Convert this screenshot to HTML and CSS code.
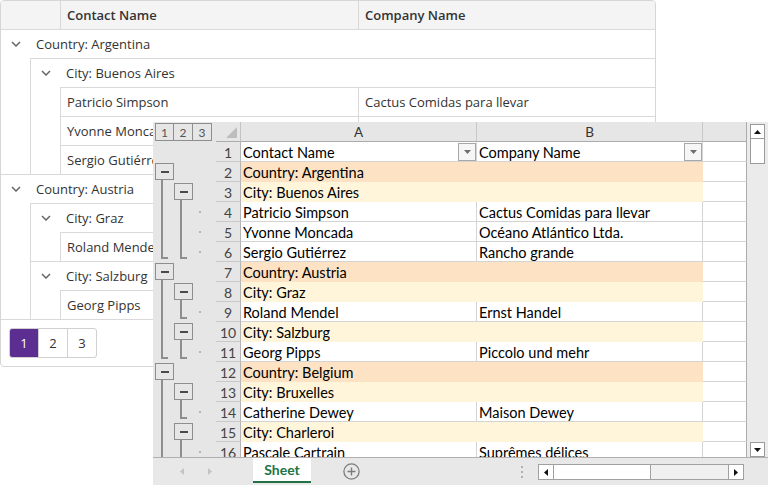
FILE: index.html
```html
<!DOCTYPE html>
<html>
<head>
<meta charset="utf-8">
<link rel="stylesheet" href="styles.css">
</head>
<body>
<div class="stage">
  <div class="grid">
    <div class="ghead">
      <div class="gh-ind"></div>
      <div class="gh-c1">Contact Name</div>
      <div class="gh-c2">Company Name</div>
    </div>

    <div class="grp">
      <div class="grow"><span class="chev"><svg width="10" height="6" viewBox="0 0 10 6"><path d="M1 1 L5 5 L9 1"/></svg></span><span class="gt">Country: Argentina</span></div>
      <div class="nest">
        <div class="grp">
          <div class="grow"><span class="chev"><svg width="10" height="6" viewBox="0 0 10 6"><path d="M1 1 L5 5 L9 1"/></svg></span><span class="gt">City: Buenos Aires</span></div>
          <div class="nest">
            <div class="drow"><div class="dc1">Patricio Simpson</div><div class="dc2">Cactus Comidas para llevar</div></div>
            <div class="drow"><div class="dc1">Yvonne Moncada</div><div class="dc2">Océano Atlántico Ltda.</div></div>
            <div class="drow"><div class="dc1">Sergio Gutiérrez</div><div class="dc2">Rancho grande</div></div>
          </div>
        </div>
      </div>
    </div>

    <div class="grp">
      <div class="grow"><span class="chev"><svg width="10" height="6" viewBox="0 0 10 6"><path d="M1 1 L5 5 L9 1"/></svg></span><span class="gt">Country: Austria</span></div>
      <div class="nest">
        <div class="grp">
          <div class="grow"><span class="chev"><svg width="10" height="6" viewBox="0 0 10 6"><path d="M1 1 L5 5 L9 1"/></svg></span><span class="gt">City: Graz</span></div>
          <div class="nest">
            <div class="drow"><div class="dc1">Roland Mendel</div><div class="dc2">Ernst Handel</div></div>
          </div>
        </div>
        <div class="grp">
          <div class="grow"><span class="chev"><svg width="10" height="6" viewBox="0 0 10 6"><path d="M1 1 L5 5 L9 1"/></svg></span><span class="gt">City: Salzburg</span></div>
          <div class="nest">
            <div class="drow"><div class="dc1">Georg Pipps</div><div class="dc2">Piccolo und mehr</div></div>
          </div>
        </div>
      </div>
    </div>

    <div class="pager">
      <div class="pgroup">
        <span class="pbtn active">1</span><span class="pbtn">2</span><span class="pbtn">3</span>
      </div>
    </div>
  </div>

  <div class="sheet">
    <div class="sheet-main">
      <div class="cells">
        <div class="srow hdr">
          <div class="ol levels"><span class="lvl">1</span><span class="lvl">2</span><span class="lvl">3</span></div>
          <div class="corner"><svg width="11" height="11" viewBox="0 0 11 11"><path d="M11 0 L11 11 L0 11 Z"/></svg></div>
          <div class="ch">A</div>
          <div class="ch">B</div>
          <div class="ch last"></div>
        </div>

        <div class="srow">
          <div class="ol"><span class="lane"></span><span class="lane"></span><span class="lane l3"></span></div>
          <div class="rh">1</div>
          <div class="c th"><span class="ct">Contact Name</span><span class="filt"><svg width="7" height="4" viewBox="0 0 7 4"><path d="M0 0 L7 0 L3.5 4 Z"/></svg></span></div>
          <div class="c th"><span class="ct">Company Name</span><span class="filt"><svg width="7" height="4" viewBox="0 0 7 4"><path d="M0 0 L7 0 L3.5 4 Z"/></svg></span></div>
          <div class="c"></div>
        </div>

        <div class="srow">
          <div class="ol"><span class="lane btn"><span class="mbtn"><i></i></span></span><span class="lane"></span><span class="lane l3"></span></div>
          <div class="rh">2</div>
          <div class="c co">Country: Argentina</div>
          <div class="c co"></div>
          <div class="c"></div>
        </div>

        <div class="srow">
          <div class="ol"><span class="lane line"></span><span class="lane btn"><span class="mbtn"><i></i></span></span><span class="lane l3"></span></div>
          <div class="rh">3</div>
          <div class="c ci">City: Buenos Aires</div>
          <div class="c ci"></div>
          <div class="c"></div>
        </div>

        <div class="srow">
          <div class="ol"><span class="lane line"></span><span class="lane line"></span><span class="lane l3 dot"></span></div>
          <div class="rh">4</div>
          <div class="c">Patricio Simpson</div>
          <div class="c">Cactus Comidas para llevar</div>
          <div class="c"></div>
        </div>

        <div class="srow">
          <div class="ol"><span class="lane line"></span><span class="lane line"></span><span class="lane l3 dot"></span></div>
          <div class="rh">5</div>
          <div class="c">Yvonne Moncada</div>
          <div class="c">Océano Atlántico Ltda.</div>
          <div class="c"></div>
        </div>

        <div class="srow">
          <div class="ol"><span class="lane end"></span><span class="lane end"></span><span class="lane l3 dot"></span></div>
          <div class="rh">6</div>
          <div class="c">Sergio Gutiérrez</div>
          <div class="c">Rancho grande</div>
          <div class="c"></div>
        </div>

        <div class="srow">
          <div class="ol"><span class="lane btn"><span class="mbtn"><i></i></span></span><span class="lane"></span><span class="lane l3"></span></div>
          <div class="rh">7</div>
          <div class="c co">Country: Austria</div>
          <div class="c co"></div>
          <div class="c"></div>
        </div>

        <div class="srow">
          <div class="ol"><span class="lane line"></span><span class="lane btn"><span class="mbtn"><i></i></span></span><span class="lane l3"></span></div>
          <div class="rh">8</div>
          <div class="c ci">City: Graz</div>
          <div class="c ci"></div>
          <div class="c"></div>
        </div>

        <div class="srow">
          <div class="ol"><span class="lane line"></span><span class="lane end"></span><span class="lane l3 dot"></span></div>
          <div class="rh">9</div>
          <div class="c">Roland Mendel</div>
          <div class="c">Ernst Handel</div>
          <div class="c"></div>
        </div>

        <div class="srow">
          <div class="ol"><span class="lane line"></span><span class="lane btn"><span class="mbtn"><i></i></span></span><span class="lane l3"></span></div>
          <div class="rh">10</div>
          <div class="c ci">City: Salzburg</div>
          <div class="c ci"></div>
          <div class="c"></div>
        </div>

        <div class="srow">
          <div class="ol"><span class="lane end"></span><span class="lane end"></span><span class="lane l3 dot"></span></div>
          <div class="rh">11</div>
          <div class="c">Georg Pipps</div>
          <div class="c">Piccolo und mehr</div>
          <div class="c"></div>
        </div>

        <div class="srow">
          <div class="ol"><span class="lane btn"><span class="mbtn"><i></i></span></span><span class="lane"></span><span class="lane l3"></span></div>
          <div class="rh">12</div>
          <div class="c co">Country: Belgium</div>
          <div class="c co"></div>
          <div class="c"></div>
        </div>

        <div class="srow">
          <div class="ol"><span class="lane line"></span><span class="lane btn"><span class="mbtn"><i></i></span></span><span class="lane l3"></span></div>
          <div class="rh">13</div>
          <div class="c ci">City: Bruxelles</div>
          <div class="c ci"></div>
          <div class="c"></div>
        </div>

        <div class="srow">
          <div class="ol"><span class="lane line"></span><span class="lane end"></span><span class="lane l3 dot"></span></div>
          <div class="rh">14</div>
          <div class="c">Catherine Dewey</div>
          <div class="c">Maison Dewey</div>
          <div class="c"></div>
        </div>

        <div class="srow">
          <div class="ol"><span class="lane line"></span><span class="lane btn"><span class="mbtn"><i></i></span></span><span class="lane l3"></span></div>
          <div class="rh">15</div>
          <div class="c ci">City: Charleroi</div>
          <div class="c ci"></div>
          <div class="c"></div>
        </div>

        <div class="srow">
          <div class="ol"><span class="lane line"></span><span class="lane line"></span><span class="lane l3 dot"></span></div>
          <div class="rh">16</div>
          <div class="c">Pascale Cartrain</div>
          <div class="c">Suprêmes délices</div>
          <div class="c"></div>
        </div>
      </div>

      <div class="vscroll">
        <span class="sbtn up"><svg width="7" height="4" viewBox="0 0 7 4"><path d="M0 4 L7 4 L3.5 0 Z"/></svg></span>
        <span class="vthumb"></span>
        <span class="vtrack"></span>
        <span class="sbtn down"><svg width="7" height="4" viewBox="0 0 7 4"><path d="M0 0 L7 0 L3.5 4 Z"/></svg></span>
      </div>
    </div>

    <div class="tabbar">
      <div class="nav">
        <svg width="4" height="7" viewBox="0 0 4 7"><path d="M4 0 L4 7 L0 3.5 Z"/></svg>
        <svg width="4" height="7" viewBox="0 0 4 7"><path d="M0 0 L0 7 L4 3.5 Z"/></svg>
      </div>
      <div class="tab">Sheet</div>
      <div class="addsheet"><svg width="17" height="17" viewBox="0 0 17 17"><circle cx="8.5" cy="8.5" r="7.6"/><path d="M8.5 4.5 V12.5 M4.5 8.5 H12.5"/></svg></div>
      <div class="tabspace"></div>
      <div class="vdots"><i></i><i></i><i></i></div>
      <div class="hscroll">
        <span class="hbtn left"><svg width="4" height="7" viewBox="0 0 4 7"><path d="M4 0 L4 7 L0 3.5 Z"/></svg></span>
        <span class="hthumb"></span>
        <span class="htrack"></span>
        <span class="hbtn right"><svg width="4" height="7" viewBox="0 0 4 7"><path d="M0 0 L0 7 L4 3.5 Z"/></svg></span>
      </div>
    </div>
  </div>
</div>
</body>
</html>
```

FILE: styles.css
```css
* { box-sizing: border-box; }
html, body { margin: 0; padding: 0; background: #ffffff; }
body { width: 768px; height: 485px; overflow: hidden; }
.stage { position: relative; width: 768px; height: 485px; }

/* ---------- back data grid ---------- */
.grid {
  width: 656px;
  border: 1px solid #d6d6d6;
  border-radius: 4px;
  font-family: "Open Sans", "Noto Sans", sans-serif;
  font-size: 13px;
  color: #333333;
  overflow: hidden;
}
.ghead {
  display: flex;
  height: 28px;
  background: #f4f4f4;
  font-weight: 600;
}
.gh-ind { width: 60px; border-right: 1px solid #d9d9d9; }
.gh-c1 { width: 298px; border-right: 1px solid #d9d9d9; padding-left: 6px; display: flex; align-items: center; }
.gh-c2 { flex: 1; padding-left: 6px; display: flex; align-items: center; }

.grow {
  display: flex;
  align-items: center;
  height: 29px;
  border-top: 1px solid #d9d9d9;
}
.chev { width: 29px; display: flex; justify-content: center; align-items: center; }
.chev svg path { fill: none; stroke: #666666; stroke-width: 1.5; }
.gt { padding-left: 6px; }
.nest { margin-left: 29px; border-left: 1px solid #d9d9d9; }
.drow { display: flex; height: 29px; border-top: 1px solid #d9d9d9; }
.dc1 { width: 298px; border-right: 1px solid #d9d9d9; padding-left: 6px; display: flex; align-items: center; white-space: nowrap; overflow: hidden; }
.dc2 { flex: 1; padding-left: 6px; display: flex; align-items: center; white-space: nowrap; }

.pager { border-top: 1px solid #d9d9d9; padding: 8px; height: 47px; }
.pgroup { display: inline-flex; border: 1px solid #d0d0d0; border-radius: 3px; overflow: hidden; height: 30px; }
.pbtn { width: 29px; display: flex; align-items: center; justify-content: center; border-left: 1px solid #d0d0d0; color: #333; }
.pbtn:first-child { border-left: none; width: 28px; }
.pbtn.active { background: #5c2e91; color: #ffffff; }

/* ---------- spreadsheet ---------- */
.sheet {
  position: absolute;
  left: 153px;
  top: 122px;
  width: 615px;
  height: 363px;
  display: flex;
  flex-direction: column;
  background: #e6e6e6;
  font-family: "Lato", "Liberation Sans", sans-serif;
  font-size: 14.5px;
  color: #000000;
}
.sheet-main { display: flex; height: 335px; }
.cells { width: 594px; height: 335px; overflow: hidden; background: #ffffff; }
.srow {
  display: grid;
  grid-template-columns: 63px 25px 236px 226px 44px;
  height: 20px;
}
.ol { display: flex; background: #e6e6e6; }
.lane { position: relative; width: 19px; height: 20px; }
.lane.l3 { width: 25px; }
.lane.line::before { content: ""; position: absolute; left: 8px; top: 0; width: 2px; height: 20px; background: #8e8e8e; }
.lane.end::before { content: ""; position: absolute; left: 8px; top: 0; width: 2px; height: 17px; background: #8e8e8e; }
.lane.end::after { content: ""; position: absolute; left: 8px; top: 15px; width: 7px; height: 2px; background: #8e8e8e; }
.lane.btn::after { content: ""; position: absolute; left: 8px; top: 18px; width: 2px; height: 2px; background: #8e8e8e; }
.lane.dot::before { content: ""; position: absolute; left: 8px; top: 9px; width: 2px; height: 2px; background: #b4b4b4; }
.mbtn {
  display: flex;
  align-items: center;
  justify-content: center;
  margin: 1px 0 0 2px;
  width: 19px;
  height: 17px;
  border: 1px solid #8e8e8e;
  background: #e6e6e6;
}
.mbtn i { display: block; width: 8px; height: 2px; background: #4a4a4a; }

.levels { align-items: flex-start; padding: 1px 0 0 2px; }
.lvl {
  width: 20px;
  height: 18px;
  border: 1px solid #8e8e8e;
  margin-left: -1px;
  display: flex;
  align-items: center;
  justify-content: center;
  font-size: 12px;
  color: #555555;
}
.lvl:first-child { margin-left: 0; width: 19px; }
.corner {
  background: #e6e6e6;
  border-bottom: 1px solid #ababab;
  border-right: 1px solid #c4c4c4;
  display: flex;
  align-items: flex-end;
  justify-content: flex-end;
  padding: 0 3px 3px 0;
}
.corner svg path { fill: #bdbdbd; }
.ch {
  background: #e6e6e6;
  border-bottom: 1px solid #ababab;
  border-right: 1px solid #c8c8c8;
  display: flex;
  align-items: center;
  justify-content: center;
  padding-top: 1px;
  font-size: 13.5px;
  color: #333333;
}
.ch.last { border-right: 1px solid #ababab; }

.rh {
  background: #e6e6e6;
  border-bottom: 1px solid #c9c9c9;
  border-right: 1px solid #b4b4b4;
  display: flex;
  align-items: center;
  justify-content: center;
  padding-top: 2px;
  color: #444444;
  font-size: 14px;
}
.c {
  border-right: 1px solid #d4d4d4;
  border-bottom: 1px solid #d4d4d4;
  padding: 2px 0 0 2px;
  line-height: 17px;
  white-space: nowrap;
  overflow: hidden;
}
.srow > .c:last-child { border-right-color: #ababab; }
.c.co { background: #fde2c4; border-color: #fde2c4; }
.c.ci { background: #fff5da; border-color: #fff5da; }
.c.th { display: flex; align-items: center; justify-content: space-between; padding: 0 0 0 2px; }
.c.th .ct { padding-top: 2px; }
.filt {
  width: 18px;
  height: 18px;
  border: 1px solid #a8a8a8;
  background: #f6f6f6;
  display: flex;
  align-items: center;
  justify-content: center;
  margin-right: 0;
}
.filt svg path { fill: #6e6e6e; }

.vscroll {
  width: 21px;
  background: #ebebeb;
  display: flex;
  flex-direction: column;
  padding: 2px 3px 0 3px;
}
.sbtn {
  height: 15px;
  background: #ffffff;
  border: 1px solid #9a9a9a;
  display: flex;
  align-items: center;
  justify-content: center;
}
.sbtn svg path { fill: #111111; }
.vthumb { height: 25px; background: #ffffff; border: 1px solid #9a9a9a; border-top: none; }
.vtrack { flex: 1; }

.tabbar {
  height: 28px;
  border-top: 1px solid #b0b0b0;
  background: #e8e8e8;
  display: flex;
  align-items: flex-start;
}
.nav { width: 100px; height: 27px; display: flex; align-items: center; padding-left: 27px; gap: 24px; }
.nav svg path { fill: #c4c4c4; }
.tab {
  width: 58px;
  height: 25px;
  background: #ffffff;
  border-bottom: 2px solid #217346;
  color: #217346;
  font-weight: 700;
  font-size: 14px;
  display: flex;
  align-items: center;
  justify-content: center;
}
.addsheet { margin-left: 32px; height: 27px; display: flex; align-items: center; }
.addsheet svg circle { fill: none; stroke: #7c7c7c; stroke-width: 1.3; }
.addsheet svg path { fill: none; stroke: #7c7c7c; stroke-width: 1.4; }
.tabspace { flex: 1; }
.vdots { height: 27px; display: flex; flex-direction: column; justify-content: center; gap: 3px; margin-right: 15px; }
.vdots i { display: block; width: 2px; height: 2px; background: #b0b0b0; }
.hscroll {
  margin-top: 6px;
  margin-right: 24px;
  width: 206px;
  height: 16px;
  border: 1px solid #a0a0a0;
  background: #f0f0f0;
  display: flex;
}
.hbtn { width: 15px; background: #ffffff; display: flex; align-items: center; justify-content: center; }
.hbtn.left { border-right: 1px solid #a0a0a0; }
.hbtn.right { border-left: 1px solid #a0a0a0; }
.hbtn svg path { fill: #111111; }
.hthumb { width: 97px; background: #ffffff; border-right: 1px solid #a0a0a0; }
.htrack { flex: 1; }
```
